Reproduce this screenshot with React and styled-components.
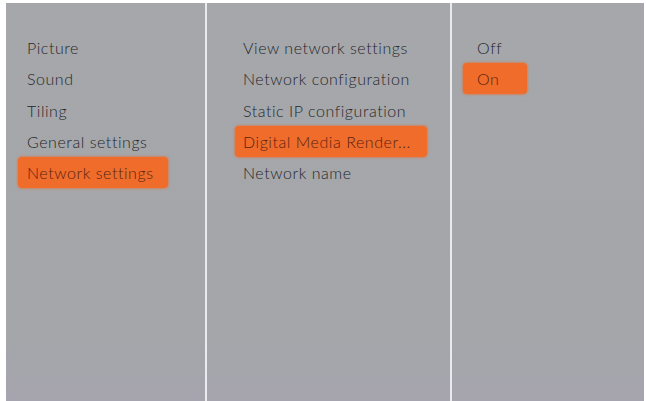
import React from 'react';
import styled, { createGlobalStyle } from 'styled-components';

const Global = createGlobalStyle`
	html, body {
		margin: 0;
		padding: 0;
		background: #ffffff;
	}
	body {
		font-family: Lato, "Open Sans", sans-serif;
	}
`;

const Screen = styled.div`
	width: 646px;
	height: 401px;
	box-sizing: border-box;
	padding: 3px 2px 0 6px;
	background: #ffffff;
`;

const Panes = styled.div`
	display: grid;
	grid-template-columns: 199px 243px 1fr;
	column-gap: 2px;
	height: 100%;
	background: #e9eaee;
`;

const Pane = styled.ul`
	list-style: none;
	margin: 0;
	padding: 29px 0 0 ${(p) => p.$inset}px;
	background: linear-gradient(#a5a7ab, #a4a6aa 85%, #a6a4ae);
`;

const Item = styled.li`
	box-sizing: border-box;
	width: ${(p) => p.$width}px;
	height: 31px;
	margin-bottom: 0.3px;
	padding-left: ${(p) => p.$pad}px;
	display: flex;
	align-items: center;
	border-radius: 4px;
	font-size: 16px;
	font-weight: 300;
	letter-spacing: 0.55px;
	white-space: nowrap;
	color: ${(p) => (p.$active ? '#5b2312' : '#26272a')};
	background: ${(p) => (p.$active ? '#ef6c2b' : 'transparent')};
	box-shadow: ${(p) => (p.$active ? '0 0 2px 1px rgba(239, 108, 43, 0.55)' : 'none')};
`;

const menus = [
	{
		inset: 12,
		width: 150,
		pad: 9,
		items: ['Picture', 'Sound', 'Tiling', 'General settings', 'Network settings'],
		active: 4,
	},
	{
		inset: 28,
		width: 192,
		pad: 8,
		items: [
			'View network settings',
			'Network configuration',
			'Static IP configuration',
			'Digital Media Render...',
			'Network name',
		],
		active: 3,
	},
	{
		inset: 11,
		width: 64,
		pad: 14,
		items: ['Off', 'On'],
		active: 1,
	},
];

export default function App() {
	return (
		<>
			<Global />
			<Screen>
				<Panes>
					{menus.map((m, i) => (
						<Pane key={i} $inset={m.inset}>
							{m.items.map((label, j) => (
								<Item key={label} $width={m.width} $pad={m.pad} $active={j === m.active}>
									{label}
								</Item>
							))}
						</Pane>
					))}
				</Panes>
			</Screen>
		</>
	);
}
